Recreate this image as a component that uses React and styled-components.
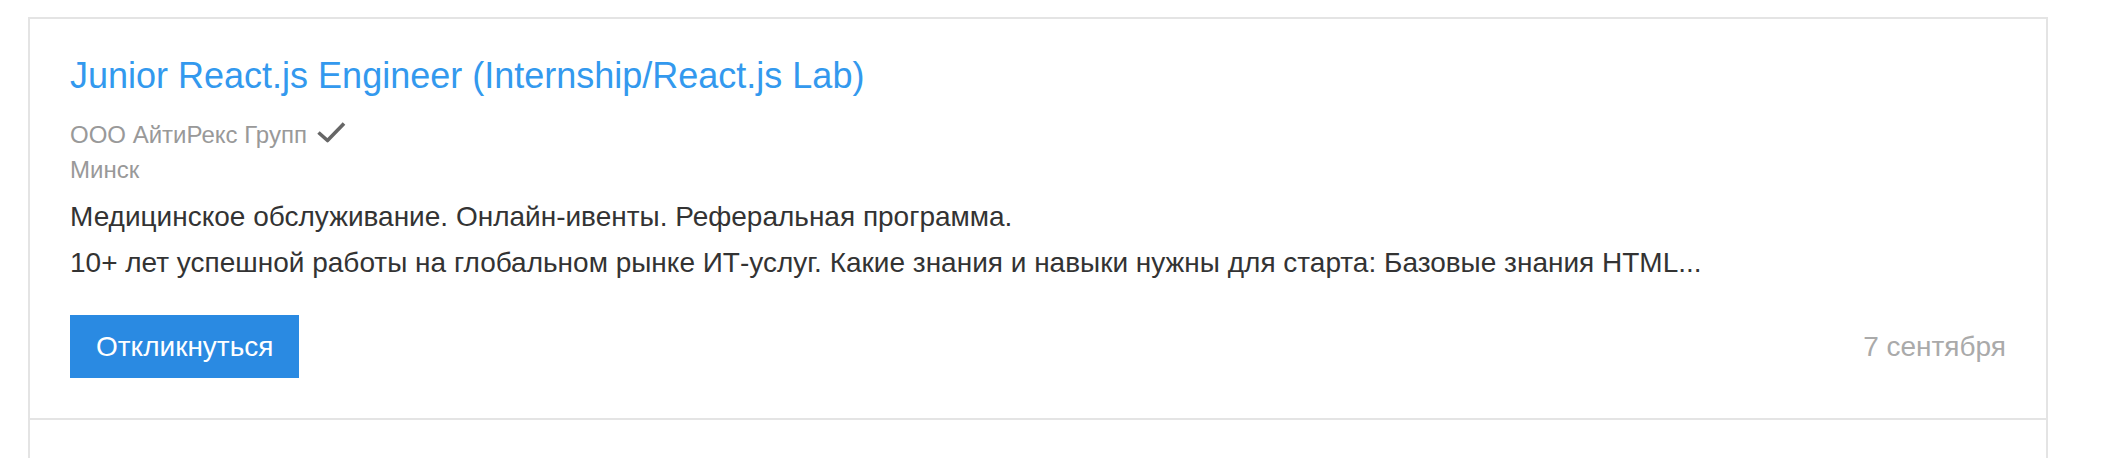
import styled, { createGlobalStyle } from "styled-components";

const GlobalStyle = createGlobalStyle`
  html,
  body {
    margin: 0;
    background: #fff;
    font-family: "Liberation Sans", Arial, Helvetica, sans-serif;
  }
`;

const Page = styled.div`
  padding: 17px 54px 0 28px;
`;

const VacancyList = styled.ul`
  margin: 0;
  padding: 0;
  list-style: none;
  border: 2px solid #e4e4e4;
  border-bottom: none;
`;

const StyledVacancy = styled.li`
  padding: 40px 40px;
  border-bottom: 2px solid #e4e4e4;
  min-height: ${(props) => (props.$empty ? "60px" : "auto")};
`;

const Title = styled.a`
  display: block;
  font-size: 36px;
  line-height: 34px;
  color: #3399ee;
  text-decoration: none;
  margin-bottom: 24px;
`;

const Meta = styled.div`
  font-size: 24px;
  line-height: 35px;
  color: #999;
`;

const Company = styled.div`
  display: flex;
  align-items: center;
  gap: 9px;
`;

const CheckIcon = styled.svg`
  width: 30px;
  height: 22px;
  margin-bottom: 6px;
`;

const Description = styled.p`
  margin: 7px 0 0;
  font-size: 28px;
  line-height: 46px;
  color: #333;
`;

const Footer = styled.div`
  display: flex;
  justify-content: space-between;
  align-items: center;
  margin-top: 29px;
`;

const RespondBtn = styled.button`
  height: 63px;
  padding: 0 26px;
  border: none;
  background-color: #2a8ae2;
  color: #fff;
  font-family: inherit;
  font-size: 28px;
  cursor: pointer;
`;

const PostedDate = styled.span`
  font-size: 28px;
  color: #aaa;
`;

function Vacancy({ vacancy }) {
  return (
    <StyledVacancy>
      <Title href="#">{vacancy.title}</Title>
      <Meta>
        <Company>
          {vacancy.company}
          {vacancy.verified && (
            <CheckIcon viewBox="0 0 30 22">
              <path
                d="M2.5 11.5 L11.5 19.5 L28 2.5"
                fill="none"
                stroke="#666"
                strokeWidth="3.6"
                strokeLinejoin="round"
              />
            </CheckIcon>
          )}
        </Company>
        <div>{vacancy.city}</div>
      </Meta>
      <Description>
        {vacancy.description.map((line) => (
          <span key={line}>
            {line}
            <br />
          </span>
        ))}
      </Description>
      <Footer>
        <RespondBtn>Откликнуться</RespondBtn>
        <PostedDate>{vacancy.date}</PostedDate>
      </Footer>
    </StyledVacancy>
  );
}

const vacancies = [
  {
    id: 1,
    title: "Junior React.js Engineer (Internship/React.js Lab)",
    company: "ООО АйтиРекс Групп",
    verified: true,
    city: "Минск",
    description: [
      "Медицинское обслуживание. Онлайн-ивенты. Реферальная программа.",
      "10+ лет успешной работы на глобальном рынке ИТ-услуг. Какие знания и навыки нужны для старта: Базовые знания HTML...",
    ],
    date: "7 сентября",
  },
];

function App() {
  return (
    <Page>
      <GlobalStyle />
      <VacancyList>
        {vacancies.map((vacancy) => (
          <Vacancy key={vacancy.id} vacancy={vacancy} />
        ))}
        <StyledVacancy $empty />
      </VacancyList>
    </Page>
  );
}

export default App;
